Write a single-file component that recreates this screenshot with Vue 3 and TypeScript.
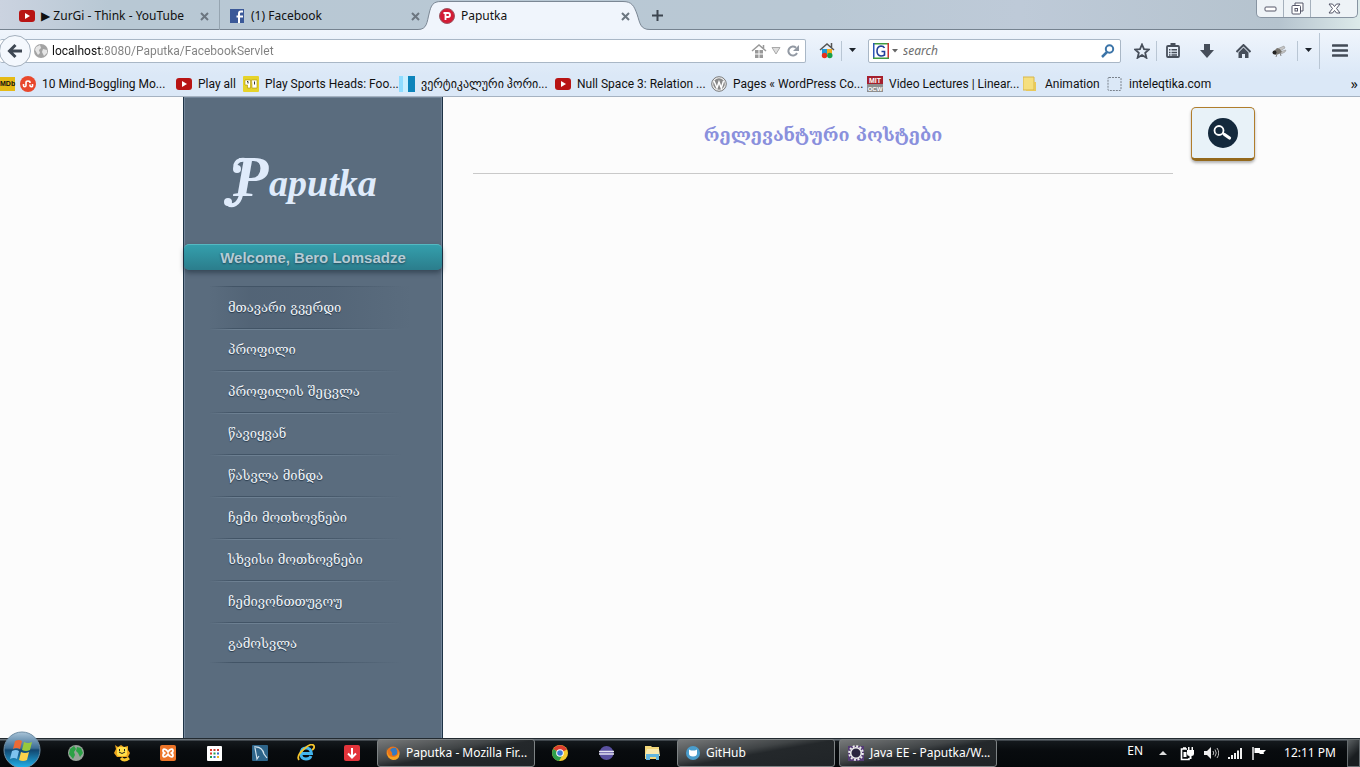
<script setup lang="ts">
import { ref } from 'vue'

interface Tab {
  icon: 'youtube' | 'facebook' | 'paputka'
  title: string
}
interface Bookmark {
  icon: string
  label: string
  size: 'full' | 'short' | 'medium' | 'auto'
}

const tabs: Tab[] = [
  { icon: 'youtube', title: '▶ ZurGi - Think - YouTube' },
  { icon: 'facebook', title: '(1) Facebook' },
  { icon: 'paputka', title: 'Paputka' },
]
const activeTab = ref(2)
const address = ref('localhost:8080/Paputka/FacebookServlet')
const query = ref('')

const bookmarks: Bookmark[] = [
  { icon: 'stumble', label: '10 Mind-Boggling Mo...', size: 'full' },
  { icon: 'youtube', label: 'Play all', size: 'short' },
  { icon: 'sports', label: 'Play Sports Heads: Foo...', size: 'full' },
  { icon: 'blue', label: 'ვერტიკალური ჰორი...', size: 'full' },
  { icon: 'youtube', label: 'Null Space 3: Relation ...', size: 'full' },
  { icon: 'wordpress', label: 'Pages « WordPress Co...', size: 'full' },
  { icon: 'mit', label: 'Video Lectures | Linear...', size: 'full' },
  { icon: 'folder', label: 'Animation', size: 'medium' },
  { icon: 'blank', label: 'inteleqtika.com', size: 'auto' },
]

const menu: string[] = [
  'მთავარი გვერდი',
  'პროფილი',
  'პროფილის შეცვლა',
  'წავიყვან',
  'წასვლა მინდა',
  'ჩემი მოთხოვნები',
  'სხვისი მოთხოვნები',
  'ჩემივონთთუგოუ',
  'გამოსვლა',
]
</script>

<template>
  <div class="desktop">
    <header class="browser">
      <div class="tabstrip">
        <div v-for="(tab, i) in tabs" :key="tab.title" class="tab" :class="{ active: i === activeTab }">
          <svg v-if="i === activeTab" class="tab-shape" width="232" height="30" viewBox="0 0 232 30" aria-hidden="true">
            <path d="M0 30V29.500C9 29.500 9 22 11 14C13 5 15 1.500 23 1.500H205C214 1.500 216 6 219 14C222 23 222 29.500 232 29.500V30Z" fill="#f0f5fc" />
            <path d="M0 29.500C9 29.500 9 22 11 14C13 5 15 1.500 23 1.500H205C214 1.500 216 6 219 14C222 23 222 29.500 232 29.500" fill="none" stroke="#7b8794" />
          </svg>
          <button class="tab-select" type="button" @click="activeTab = i">
            <svg v-if="tab.icon === 'youtube'" width="16" height="16" viewBox="0 0 16 16" aria-hidden="true">
              <rect y="2" width="16" height="12" rx="3" fill="#b81414" /><path d="M6 5l5 3-5 3z" fill="#fff" />
            </svg>
            <svg v-else-if="tab.icon === 'facebook'" width="16" height="16" viewBox="0 0 16 16" aria-hidden="true">
              <rect x="1" y="1" width="14" height="14" fill="#3b5998" /><path d="M14 3.500h-2q-2 0-2 2V15M7.500 8.500H14" fill="none" stroke="#fff" stroke-width="2" />
            </svg>
            <svg v-else width="16" height="16" viewBox="0 0 16 16" aria-hidden="true">
              <circle cx="8" cy="8" r="7.500" fill="#d31c35" stroke="#9c5863" /><path d="M6.500 12V5H9q2 0 2 2T9 9H6.500M4.500 5H7" fill="none" stroke="#fff" stroke-width="1.800" />
            </svg>
            <span>{{ tab.title }}</span>
          </button>
          <button class="tab-close" type="button" aria-label="Close tab">
            <svg width="9" height="9" viewBox="0 0 9 9"><path d="M1 1l7 7M8 1L1 8" stroke="#6c7680" stroke-width="2" /></svg>
          </button>
        </div>
        <button class="new-tab" type="button" aria-label="New tab">
          <svg width="11" height="11" viewBox="0 0 11 11"><path d="M5.500 0v11M0 5.500h11" stroke="#3c454f" stroke-width="2" /></svg>
        </button>
        <div class="window-buttons">
          <button type="button" aria-label="Minimize">
            <svg width="13" height="6" viewBox="0 0 13 6"><rect x="1" y="1" width="11" height="4" rx="1" fill="#fff" stroke="#545668" /></svg>
          </button>
          <button type="button" aria-label="Restore">
            <svg width="13" height="13" viewBox="0 0 13 13"><path d="M4 3V1h8v8h-2" fill="#fff" stroke="#545668" /><rect x="1" y="3.500" width="8.500" height="8.500" rx="1" fill="#fff" stroke="#545668" /><rect x="4" y="6.500" width="2.500" height="2.500" fill="none" stroke="#545668" /></svg>
          </button>
          <button type="button" class="close" aria-label="Close">
            <svg width="13" height="11" viewBox="0 0 13 11"><path d="M1 1h3.500l2 2.500L8.500 1H12L8.500 5.500 12 10H8.500l-2-2.500-2 2.500H1l3.500-4.500z" fill="#fff" stroke="#545668" /></svg>
          </button>
        </div>
      </div>

      <div class="navbar">
        <div class="urlbar">
          <button class="back" type="button" aria-label="Back">
            <svg width="16" height="16" viewBox="0 0 16 16"><path d="M15 8H3M8.500 2L2.500 8l6 6" fill="none" stroke="#3e4753" stroke-width="3" /></svg>
          </button>
          <svg width="14" height="14" viewBox="0 0 14 14" aria-hidden="true"><circle cx="7" cy="7" r="7" fill="#a3a3a3" /><path d="M2 3l4-2 1 3-2 2 1 3-2 2-3-5zM9 5l4 1v3l-3 3-2-4z" fill="#e6e6e6" /></svg>
          <input v-model="address" class="address" type="text" aria-label="Address" />
          <button type="button" aria-label="Site home" class="in-url">
            <svg width="16" height="16" viewBox="0 0 16 16"><path d="M1 8l7-6 7 6M12.500 2v4" fill="none" stroke="#999" stroke-width="1.500" /><path d="M4 7h3.500v3.500H4zM8.500 7H12v3.500H8.500zM4 11.500h3.500V15H4zM8.500 11.500H12V15H8.500z" fill="#999" /></svg>
          </button>
          <button type="button" aria-label="History" class="in-url">
            <svg width="10" height="8" viewBox="0 0 10 8"><path d="M1 .500h8L5 7z" fill="#ddd" stroke="#aaa" /></svg>
          </button>
          <button type="button" aria-label="Reload" class="in-url">
            <svg width="12" height="12" viewBox="0 0 12 12"><path d="M10 8A4.500 4.500 0 1 1 9 2.800" fill="none" stroke="#9299a3" stroke-width="2" /><path d="M12 0v6H6z" fill="#9299a3" /></svg>
          </button>
        </div>
        <button type="button" class="tool home-color" aria-label="Speed dial">
          <svg width="16" height="17" viewBox="0 0 16 17"><path d="M1 8l7-6 7 6M12.500 1v5" fill="none" stroke="#555" stroke-width="1.500" /><path d="M3 7h5v5H3z" fill="#1c9ad8" /><path d="M8 7h5v5H8z" fill="#f4a91b" /><circle cx="5.500" cy="13.500" r="2.700" fill="#e8301c" /><circle cx="10.800" cy="13.500" r="2.700" fill="#18a04a" /></svg>
        </button>
        <button type="button" class="drop" aria-label="Speed dial options">
          <svg width="7" height="5" viewBox="0 0 7 5"><path d="M0 0h7L3.500 4z" fill="#1d232b" /></svg>
        </button>
        <form class="search" @submit.prevent>
          <svg width="16" height="16" viewBox="0 0 16 16" aria-hidden="true"><path d="M0 0h16v1.500H0z" fill="#3f9b3f" /><path d="M0 0h1.500v16H0z" fill="#2a55b8" /><path d="M14.500 0H16v16h-1.500z" fill="#c33" /><path d="M0 14.500h16V16H0z" fill="#3f9b3f" /><path d="M11.500 5Q10.500 3 8 3 4 3.500 4 8t4 5q2 0 3.500-1V8.500H8.500" fill="none" stroke="#213f99" stroke-width="1.600" /></svg>
          <svg width="6" height="4" viewBox="0 0 6 4" aria-hidden="true"><path d="M0 0h6L3 3.500z" fill="#666" /></svg>
          <input v-model="query" type="text" placeholder="search" aria-label="Search" />
          <button type="submit" aria-label="Search the web">
            <svg width="14" height="14" viewBox="0 0 14 14"><circle cx="8.500" cy="5" r="3.700" fill="none" stroke="#3b74a8" stroke-width="2" /><path d="M6 8l-5 5" stroke="#3b74a8" stroke-width="2.500" /></svg>
          </button>
        </form>
        <button type="button" class="tool star" aria-label="Bookmark this page">
          <svg width="16" height="16" viewBox="0 0 16 16"><path d="M8 1.500l2 4.600 5 .400-3.800 3.300 1.200 5L8 12.100l-4.400 2.700 1.200-5L1 6.500l5-.400z" fill="none" stroke="#464e5a" stroke-width="1.800" /></svg>
        </button>
        <button type="button" class="tool list" aria-label="Bookmarks list">
          <svg width="14" height="15" viewBox="0 0 14 15"><rect x="1" y="3" width="12" height="11" rx="1" fill="none" stroke="#464e5a" stroke-width="1.800" /><path d="M4.500 0h5v3h-5zM3 6h1.500v1.500H3zM3 8.700h1.500v1.500H3zM3 11.300h1.500v1.500H3zM5.500 6H11v1.500H5.500zM5.500 8.700H11v1.500H5.500zM5.500 11.300H11v1.500H5.500z" fill="#464e5a" /></svg>
        </button>
        <button type="button" class="tool" aria-label="Downloads">
          <svg width="14" height="14" viewBox="0 0 14 14"><path d="M4 0h6v6h4l-7 8-7-8h4z" fill="#464e5a" /></svg>
        </button>
        <button type="button" class="tool" aria-label="Home">
          <svg width="15" height="14" viewBox="0 0 15 14"><path d="M.500 8l7-7 7 7" fill="none" stroke="#464e5a" stroke-width="2" /><path d="M2.500 8.500l5-5 5 5V14h-3.500v-4h-3v4H2.500z" fill="#464e5a" /></svg>
        </button>
        <button type="button" class="tool" aria-label="Firebug">
          <svg width="16" height="12" viewBox="0 0 16 12"><path d="M6 4l7-3 1 2-5 3zM8 7l7-2-1 2-4 2z" fill="#c4c4c4" stroke="#8a8a8a" stroke-width=".500" /><path d="M3 6l3-3 3 1 2 3-3 2-4 1z" fill="#77746e" /><circle cx="3.500" cy="7.500" r="2" fill="#222" /><path d="M6 9l-1 3M9 8l1 3" stroke="#888" /></svg>
        </button>
        <button type="button" class="drop fly-drop" aria-label="Firebug options">
          <svg width="7" height="5" viewBox="0 0 7 5"><path d="M0 0h7L3.500 4z" fill="#1d232b" /></svg>
        </button>
        <button type="button" class="tool app-menu" aria-label="Menu">
          <svg width="16" height="13" viewBox="0 0 16 13"><path d="M1 1.500h14M1 6.500h14M1 11.500h14" stroke="#424a56" stroke-width="2.600" stroke-linecap="round" /></svg>
        </button>
      </div>

      <nav class="bookmarks" aria-label="Bookmarks">
        <a href="#" class="imdb" aria-label="IMDb">MDb</a>
        <a v-for="b in bookmarks" :key="b.label" href="#" class="bookmark" :class="b.size">
          <svg width="16" height="16" viewBox="0 0 16 16" aria-hidden="true">
            <template v-if="b.icon === 'stumble'"><circle cx="8" cy="8" r="8" fill="#e8482d" /><path d="M3.500 8v1.500q0 1.300 1.200 1.300T6 9.500v-3Q6 5 8 5t2 1.500V7m0 1.500v1q0 1.300 1.300 1.300t1.200-1.300V8" fill="none" stroke="#fff" stroke-width="1.600" /></template>
            <template v-else-if="b.icon === 'youtube'"><rect y="2" width="16" height="12" rx="3" fill="#b81414" /><path d="M6 5l5 3-5 3z" fill="#fff" /></template>
            <template v-else-if="b.icon === 'sports'"><rect width="16" height="16" rx="1" fill="#e6d32a" /><path d="M2 4h5.500v8H4.500V9H2zM8.500 4H14v8H9V9z" fill="#fff" stroke="#a89005" stroke-width=".600" /><path d="M4 5.500h1v2M11.500 5.500v3" stroke="#333" fill="none" /></template>
            <template v-else-if="b.icon === 'blue'"><path d="M0 0h4v16H0z" fill="#8fdcff" /><path d="M4 0h5v16H4z" fill="#c9efff" /><path d="M9 0h7v16H9z" fill="#0d84bb" /></template>
            <template v-else-if="b.icon === 'wordpress'"><circle cx="8" cy="8" r="7.300" fill="#f1f1f1" stroke="#777" /><circle cx="8" cy="8" r="5.800" fill="#888" /><path d="M3 5l3 7 2-6 2.300 6L12.500 5" fill="none" stroke="#fff" stroke-width="1.500" /></template>
            <template v-else-if="b.icon === 'mit'"><path d="M0 0h16v8H0z" fill="#a51f2d" /><path d="M0 8h16v8H0z" fill="#8e8e8e" /><text x="8" y="7" class="mini">MIT</text><text x="8" y="15" class="mini ocw">OCW</text></template>
            <template v-else-if="b.icon === 'folder'"><path d="M0 1h11v13H0z" fill="#f5df7f" stroke="#d8b64a" /><path d="M11 6h2v9H3v-1h8z" fill="#e9c95a" /></template>
            <rect v-else x="1" y="1.500" width="13" height="13" rx="1" fill="none" stroke="#7a828c" stroke-dasharray="2 1" />
          </svg>
          <span>{{ b.label }}</span>
        </a>
        <button type="button" class="more" aria-label="More bookmarks">»</button>
      </nav>
    </header>

    <div class="page">
      <aside class="sidebar">
        <a href="#" class="logo" aria-label="Paputka">
          <svg width="180" height="70" viewBox="0 0 180 70">
            <path d="M27 11C19 10 15 16 19 21M23 46C21 55 14 59 9 54" fill="none" stroke="#dfebfb" stroke-width="4" stroke-linecap="round" />
            <circle cx="19" cy="20" r="4" fill="#dfebfb" /><circle cx="10" cy="53" r="4" fill="#dfebfb" />
            <text x="15" y="47" class="logo-cap">P</text>
            <text x="51" y="47" class="logo-text">aputka</text>
          </svg>
        </a>
        <p class="welcome">Welcome, Bero Lomsadze</p>
        <nav class="menu" aria-label="Main">
          <a v-for="item in menu" :key="item" href="#">{{ item }}</a>
        </nav>
      </aside>
      <main class="content">
        <h1>რელევანტური პოსტები</h1>
        <button type="button" class="find" aria-label="Find">
          <svg width="30" height="30" viewBox="0 0 30 30"><circle cx="15" cy="15" r="15" fill="#14293c" /><circle cx="11" cy="12.500" r="4.500" fill="none" stroke="#fff" stroke-width="1.800" /><path d="M14.500 15l2 1.500" stroke="#fff" stroke-width="2" /><path d="M16.500 16.500l5 3.500" stroke="#fff" stroke-width="3.200" stroke-linecap="round" /></svg>
        </button>
      </main>
    </div>

    <footer class="taskbar">
      <button class="start" type="button" aria-label="Start">
        <svg width="40" height="38" viewBox="0 0 40 38">
          <defs>
            <linearGradient id="orb" x1="0" y1="0" x2="0" y2="1"><stop offset="0" stop-color="#a9c4d8" /><stop offset=".45" stop-color="#3c6d94" /><stop offset=".5" stop-color="#12466f" /><stop offset="1" stop-color="#21b5ee" /></linearGradient>
          </defs>
          <circle cx="20" cy="20" r="18" fill="url(#orb)" stroke="#6f8ea5" />
          <path d="M13 11q4-2 7 0l-2 8q-4-2-7 0z" fill="#ed6a35" /><path d="M22 12q4 2 8 0l-2 8q-4 2-8 0z" fill="#98c93c" />
          <path d="M10 21q4-2 7 0l-2 8q-3-2-7 0z" fill="#7fc3ef" /><path d="M19 22q4 2 8 0l-2 8q-4 2-8 0z" fill="#fbd24b" />
        </svg>
      </button>
      <button class="pin" type="button" aria-label="Globe">
        <svg width="16" height="16" viewBox="0 0 16 16"><circle cx="8" cy="8" r="8" fill="#98a39a" /><path d="M2 4l4-3 2 3-2 3 1 3-2 4-4-5zM9 2l4 1 2 5-3 4-2-4-2-2z" fill="#2ca146" /></svg>
      </button>
      <button class="pin" type="button" aria-label="Messenger">
        <svg width="18" height="18" viewBox="0 0 18 18"><path d="M2 1l3 2 3-2 3 2 4-1v4l2 3-2 4H4L1 9l2-4z" fill="#eda51e" /><rect x="4" y="3" width="10" height="9" rx="2" fill="#ffe04b" /><path d="M6.500 5v2M11.500 5v2M6 8q3 3 6 0" fill="none" stroke="#222" /><path d="M8 14q3 4 8 0" stroke="#f7c52e" stroke-width="3" fill="none" /></svg>
      </button>
      <button class="pin" type="button" aria-label="XAMPP">
        <svg width="16" height="16" viewBox="0 0 16 16"><rect width="16" height="16" rx="2" fill="#ec7428" /><path d="M6.500 5Q3 3 3 5.500T5.500 8Q3 8 3 10.500T6.500 11L8 9l1.500 2Q13 13 13 10.500T10.500 8Q13 8 13 5.500T9.500 5L8 7z" fill="none" stroke="#fff" stroke-width="1.800" /></svg>
      </button>
      <button class="pin" type="button" aria-label="Apps">
        <svg width="15" height="15" viewBox="0 0 15 15"><rect width="15" height="15" rx="1" fill="#fff" /><path d="M3 3h2v2H3zM3 6.500h2v2H3z" fill="#d93a2b" /><path d="M6.500 3h2v2h-2zM10 3h2v2h-2z" fill="#c93f37" /><path d="M6.500 6.500h2v2h-2zM3 10h2v2H3z" fill="#249b4b" /><path d="M10 6.500h2v2h-2zM6.500 10h2v2h-2z" fill="#376bc4" /><path d="M10 10h2v2h-2z" fill="#edb521" /></svg>
      </button>
      <button class="pin" type="button" aria-label="MySQL Workbench">
        <svg width="16" height="16" viewBox="0 0 16 16"><rect width="16" height="16" rx="1" fill="#2d6489" /><path d="M2 2q8-1 10 7l3 4M3 3l2 11 2-3" fill="none" stroke="#d4e4ee" stroke-width="1.200" /></svg>
      </button>
      <button class="pin" type="button" aria-label="Internet Explorer">
        <svg width="18" height="18" viewBox="0 0 18 18"><path d="M4 9.500h10.500Q14 4 9 4T4 10q0 5 5 5 4 0 5-3" fill="none" stroke="#43b5ee" stroke-width="2.800" /><path d="M2 16Q-1 12 7 5t10-3q1 2-2 4" fill="none" stroke="#f5c52c" stroke-width="1.800" /></svg>
      </button>
      <button class="pin" type="button" aria-label="Downloader">
        <svg width="16" height="16" viewBox="0 0 16 16"><rect width="16" height="16" rx="2" fill="#e3343b" /><path d="M8 3v9M4 8.500l4 4 4-4" fill="none" stroke="#fff" stroke-width="2" /></svg>
      </button>
      <button class="task" type="button">
        <svg width="14" height="14" viewBox="0 0 14 14" aria-hidden="true"><circle cx="7" cy="7" r="6.500" fill="#e8731a" /><path d="M4 4q2-3 6-2 2 3 1 6-3 3-5 1 1-2-2-5z" fill="#3479c2" /><path d="M1 2q0 9 6 9 5 0 6-6 2 9-6 9-7-1-6-12z" fill="#f6a523" /></svg>
        <span>Paputka - Mozilla Fir...</span>
      </button>
      <button class="pin" type="button" aria-label="Chrome">
        <svg width="16" height="16" viewBox="0 0 16 16"><circle cx="8" cy="8" r="8" fill="#f6cb2f" /><path d="M8 8L1.200 4A8 8 0 0 1 15 4.500z" fill="#dd3e30" /><path d="M8 8L1.200 4A8 8 0 0 0 7 16l3-5z" fill="#2e9f4c" /><circle cx="8" cy="8" r="3.800" fill="#fff" /><circle cx="8" cy="8" r="2.800" fill="#3b78d8" /></svg>
      </button>
      <button class="pin" type="button" aria-label="Eclipse">
        <svg width="15" height="14" viewBox="0 0 15 14"><circle cx="7.500" cy="7" r="7" fill="#5a51a0" /><path d="M0 5.500h15M0 8h15" stroke="#e5e4f2" stroke-width="1.300" /></svg>
      </button>
      <button class="pin" type="button" aria-label="Explorer">
        <svg width="17" height="16" viewBox="0 0 17 16"><path d="M1 1h6l1 1h7v12H1z" fill="#f3d77a" /><path d="M3 4h12l1 7H1z" fill="#f9e9ae" /><path d="M2 9h13v6h-3v-3H6v3H2z" fill="#63b6de" /></svg>
      </button>
      <button class="task" type="button">
        <svg width="14" height="14" viewBox="0 0 14 14" aria-hidden="true"><circle cx="7" cy="7" r="7" fill="#4a9dcc" /><path d="M3 3.500l2 1h4l2-1v4q0 3-4 3t-4-3z" fill="#fff" /></svg>
        <span>GitHub</span>
      </button>
      <button class="task" type="button">
        <svg width="16" height="16" viewBox="0 0 16 16" aria-hidden="true"><rect y="1" width="16" height="15" fill="#543b75" /><circle cx="8" cy="8" r="6.800" fill="none" stroke="#eee" stroke-width="2" stroke-dasharray="2 1.560" /><circle cx="8" cy="8" r="5.300" fill="#2b2540" stroke="#eee" stroke-width="1.500" /></svg>
        <span>Java EE - Paputka/W...</span>
      </button>
      <div class="tray">
        <span class="lang">EN</span>
        <button type="button" aria-label="Show hidden icons"><svg width="8" height="4" viewBox="0 0 8 4"><path d="M4 0l4 4H0z" fill="#ddd" /></svg></button>
        <button type="button" aria-label="Power"><svg width="14" height="15" viewBox="0 0 14 15"><path d="M7 3H1.500v10.500H9V12M3 2h3" fill="none" stroke="#fff" stroke-width="1.600" /><path d="M3.500 6h3v5h-3zM7 4h7v4q0 2-2.500 2v3H9.500v-3Q7 10 7 8zM8 1h1.500v3H8zM11.500 1H13v3h-1.500z" fill="#fff" /></svg></button>
        <button type="button" aria-label="Volume"><svg width="15" height="12" viewBox="0 0 15 12"><path d="M0 4h3l4-4v12L3 8H0z" fill="#eee" /><path d="M9 4q1.500 2 0 4M11 2.500q2.500 3.500 0 7M13 1q3.500 5 0 10" fill="none" stroke="#bbb" /></svg></button>
        <button type="button" aria-label="Network"><svg width="14" height="11" viewBox="0 0 14 11"><path d="M0 9h2v2H0zM3 7h2v4H3zM6 5h2v6H6zM9 2.500h2V11H9zM12 0h2v11h-2z" fill="#eee" /></svg></button>
        <button type="button" aria-label="Action center"><svg width="14" height="13" viewBox="0 0 14 13"><path d="M1 0v13" stroke="#eee" stroke-width="1.500" /><path d="M2.500 1H8v2h6l-2.500 2.500L12 7H7.500V6h-5z" fill="#fff" /></svg></button>
        <time class="clock">12:11 PM</time>
        <button type="button" class="show-desktop" aria-label="Show desktop"></button>
      </div>
    </footer>
  </div>
</template>

<style>
body {
  margin: 0;
}
</style>

<style scoped>
* {
  box-sizing: border-box;
}
.desktop {
  display: flex;
  flex-direction: column;
  min-height: 100vh;
  background: #fcfcfc;
  font: 12px/16px "Noto Sans", "DejaVu Sans", sans-serif;
  color: #111;
}
button {
  display: flex;
  align-items: center;
  justify-content: center;
  flex: none;
  padding: 0;
  border: 0;
  background: none;
  color: inherit;
  font: inherit;
}
svg {
  display: block;
  flex: none;
}
a {
  color: inherit;
  text-decoration: none;
}
.browser {
  border-bottom: 1px solid #a5b2c1;
  background: linear-gradient(#f0f5fc 30px, #dbe8f7 75px);
}

/* tab strip */
.tabstrip {
  display: flex;
  height: 30px;
  padding-left: 10px;
  border-bottom: 1px solid #75828f;
  background: linear-gradient(90deg, #cbd3e0, #b8c8d4 8%, #b9c8d4 60%, #becad8 75%, #b5c3ce 94%, #dceaea);
}
.tab {
  position: relative;
  display: flex;
  align-items: center;
  width: 210px;
  height: 30px;
  padding: 2px 10px 0 9px;
}
.tab:first-child {
  border-right: 1px solid #96a5b1;
}
.tab-shape {
  position: absolute;
  top: 0;
  left: -12px;
}
.tab-select {
  position: relative;
  flex: 1;
  justify-content: flex-start;
  gap: 6px;
  white-space: nowrap;
}
.tab-close {
  position: relative;
}
.new-tab {
  width: 34px;
  padding-top: 2px;
}
.window-buttons {
  display: flex;
  height: 18px;
  margin: 0 2px 0 auto;
  border: 1px solid #8794a2;
  border-top: 0;
  border-radius: 0 0 5px 5px;
  background: #eef3f7;
}
.window-buttons button {
  width: 27px;
  border-right: 1px solid #a5b0bc;
}
.window-buttons .close {
  width: 46px;
  border: 0;
}

/* navigation */
.navbar {
  display: flex;
  align-items: center;
  height: 41px;
}
.urlbar,
.search {
  display: flex;
  align-items: center;
  height: 24px;
  border: 1px solid #a9b7c6;
  border-radius: 2px;
  background: #fff;
}
.urlbar {
  flex: 1;
  border-left: 0;
}
.back {
  width: 32px;
  height: 32px;
  margin: 0 3px 0 -1px;
  border: 1px solid #a4b0bd;
  border-radius: 50%;
  background: #f4f8fd;
}
input {
  min-width: 0;
  flex: 1;
  padding: 0;
  border: 0;
  outline: 0;
  background: none;
  font: inherit;
}
.address {
  margin-left: 4px;
  background: linear-gradient(90deg, #111 50px, #808080 50px);
  background-clip: text;
  color: transparent;
  font-family: Roboto, sans-serif;
}
.in-url {
  width: 17px;
}
.in-url:last-child {
  margin-right: 4px;
}
.tool {
  width: 36px;
  height: 20px;
}
.home-color {
  border-right: 1px solid #b9c6d4;
  padding-left: 6px;
}
.drop {
  width: 20px;
}
.search {
  width: 253px;
  margin-left: 6px;
  padding: 0 5px 0 4px;
}
.search svg + svg {
  margin: 0 5px 0 3px;
}
.search input::placeholder {
  color: #6d6d6d;
  font-style: italic;
  opacity: 1;
}
.star {
  padding-left: 6px;
  border-right: 1px solid #b9c6d4;
}
.list {
  width: 32px;
}
.fly-drop {
  width: 22px;
  height: 20px;
  border-left: 1px solid #b9c6d4;
}
.app-menu {
  width: 41px;
  height: 36px;
  border-left: 1px solid #b9c6d4;
}

/* bookmarks */
.bookmarks {
  display: flex;
  align-items: center;
  height: 25px;
}
.imdb {
  width: 15px;
  height: 14px;
  margin-right: 5px;
  background: #e5ba16;
  font: bold 7px/14px "Liberation Sans", sans-serif;
}
.bookmark {
  display: flex;
  align-items: center;
  gap: 6px;
  font-family: Roboto, "DejaVu Sans", sans-serif;
  white-space: nowrap;
}
.full {
  width: 156px;
}
.short {
  width: 67px;
}
.medium {
  width: 84px;
}
.mini {
  fill: #fff;
  font: bold 7px "Liberation Sans", sans-serif;
  text-anchor: middle;
}
.ocw {
  font-size: 6px;
}
.more {
  margin: 0 2px 0 auto;
  font-size: 14px;
}

/* page */
.page {
  display: grid;
  grid-template-columns: minmax(0, 183fr) 260px minmax(0, 917fr);
  flex: 1;
}
.sidebar {
  grid-column: 2;
  border: 1px solid #1e3346;
  border-width: 0 1px;
  background: #5a6c7e;
  box-shadow: inset 1px 1px #73869a, inset -1px 0 #73869a;
}
.logo {
  display: block;
  height: 147px;
  padding: 52px 0 0 34px;
}
.logo-cap,
.logo-text {
  fill: #dfebfb;
  font: italic bold 58px "Liberation Serif", serif;
}
.logo-text {
  font-size: 38px;
}
.welcome {
  height: 26px;
  margin: 0;
  border-top: 1px solid #55b8c1;
  border-radius: 5px;
  background: linear-gradient(#349fac, #2b7d8c);
  box-shadow: 0 3px 5px rgba(20, 35, 50, 0.5);
  color: #b5ccd5;
  font: bold 15px/26px "Liberation Sans", Arial, sans-serif;
  text-align: center;
  text-shadow: 0 1px 2px #24485a;
}
.menu {
  margin: 16px 30px 0 25px;
  padding-bottom: 32px;
}
.menu a {
  display: block;
  height: 42px;
  padding-left: 19px;
  background:
    linear-gradient(90deg, transparent, #425466 12%, #425466 50%, transparent 95%) top / 100% 1px no-repeat,
    linear-gradient(90deg, transparent, #6d8092 12%, #6d8092 50%, transparent 95%) 0 1px / 100% 1px no-repeat;
  color: #f0f4f8;
  font: 13px/44px "DejaVu Serif", serif;
  text-shadow: 0 1px 1px #26384a;
}
.menu a:first-child {
  background:
    linear-gradient(90deg, transparent, #425466 12%, #425466 50%, transparent 95%) top / 100% 1px no-repeat,
    linear-gradient(90deg, transparent, rgba(60, 76, 95, 0.25) 20%, rgba(60, 76, 95, 0.2) 60%, transparent);
}
.menu a:last-child {
  height: 40px;
}
.menu::after {
  content: "";
  display: block;
  height: 1px;
  background: linear-gradient(90deg, transparent, #425466 12%, #425466 50%, transparent 95%);
}
.content {
  display: flex;
  align-items: flex-start;
  gap: 18px;
  padding-left: 30px;
}
h1 {
  flex: 0 1 700px;
  height: 77px;
  margin: 0;
  padding-top: 25px;
  border-bottom: 1px solid #c9c9c9;
  color: #8a90dc;
  font: bold 18px/26px "DejaVu Serif", serif;
  text-align: center;
}
.find {
  width: 64px;
  height: 54px;
  margin-top: 10px;
  border: 1px solid #b07d2b;
  border-bottom: 3px solid #94691c;
  border-radius: 5px;
  background: #e8f2f8;
  box-shadow: 0 2px 3px rgba(0, 0, 0, 0.3);
}

/* taskbar */
.taskbar {
  display: flex;
  align-items: center;
  height: 29px;
  border-top: 1px solid #222a30;
  background: linear-gradient(#697178 1px, #14191d 2px, #080b0e 12px, #05080a);
  color: #fff;
}
.start {
  width: 40px;
  margin: -8px 11px 0 2px;
}
.pin {
  width: 46px;
}
.task {
  justify-content: flex-start;
  width: 158px;
  height: 28px;
  margin: 0 2px;
  padding-left: 8px;
  gap: 6px;
  border: 1px solid #7e8385;
  border-radius: 3px;
  background: linear-gradient(170deg, #77797a, #404446 40%, #24282b 52%, #202427);
  white-space: nowrap;
}
.tray {
  display: flex;
  align-items: center;
  height: 28px;
  margin-left: auto;
}
.tray button {
  width: 24px;
}
.lang {
  margin-right: 8px;
  padding-bottom: 5px;
}
.clock {
  margin: 0 11px 0 13px;
}
.tray .show-desktop {
  width: 13px;
  height: 28px;
  border: 1px solid #676d70;
  background: linear-gradient(135deg, #5c6163, #191d20 60%);
}
</style>
